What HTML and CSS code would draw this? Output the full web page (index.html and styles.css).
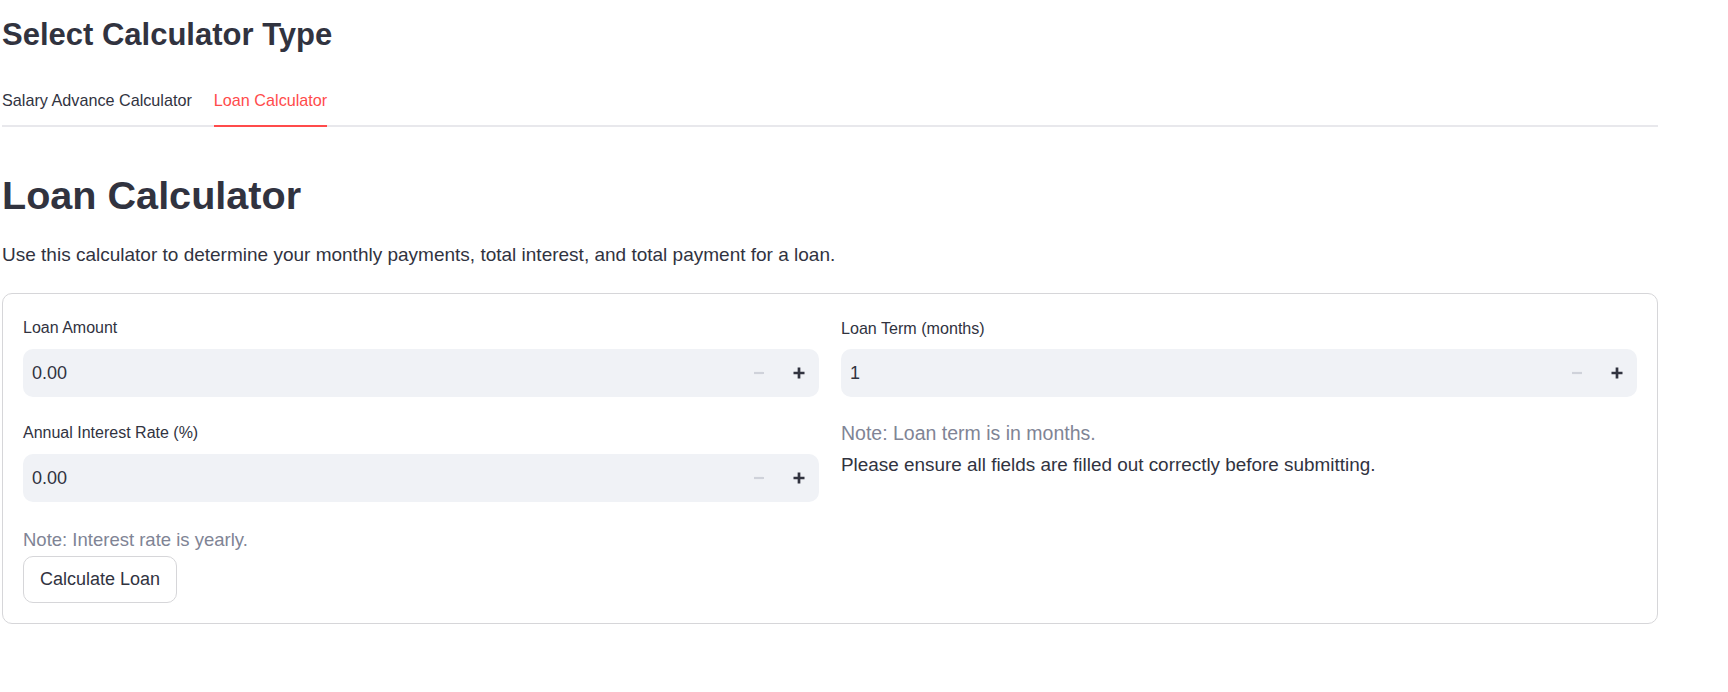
FILE: index.html
```html
<!DOCTYPE html>
<html lang="en">
<head>
<meta charset="utf-8">
<title>Loan Calculator</title>
<link rel="stylesheet" href="styles.css">
</head>
<body>
<div class="app">
  <h3 class="section-title">Select Calculator Type</h3>
  <div class="tabs">
    <div class="tab">Salary Advance Calculator</div>
    <div class="tab active">Loan Calculator</div>
  </div>
  <h1 class="page-title">Loan Calculator</h1>
  <p class="intro">Use this calculator to determine your monthly payments, total interest, and total payment for a loan.</p>
  <div class="card">
    <div class="col">
      <div class="field">
        <label class="field-label">Loan Amount</label>
        <div class="num-input">
          <span class="num-value">0.00</span>
          <button class="step" disabled><svg width="12" height="12" viewBox="0 0 12 12"><path d="M1 6h10" stroke="#cfd2da" stroke-width="2.2"/></svg></button>
          <button class="step"><svg width="12" height="12" viewBox="0 0 12 12"><path d="M6 0.5v11M0.5 6h11" stroke="#31333f" stroke-width="2.7"/></svg></button>
        </div>
      </div>
      <div class="field">
        <label class="field-label">Annual Interest Rate (%)</label>
        <div class="num-input">
          <span class="num-value">0.00</span>
          <button class="step" disabled><svg width="12" height="12" viewBox="0 0 12 12"><path d="M1 6h10" stroke="#cfd2da" stroke-width="2.2"/></svg></button>
          <button class="step"><svg width="12" height="12" viewBox="0 0 12 12"><path d="M6 0.5v11M0.5 6h11" stroke="#31333f" stroke-width="2.7"/></svg></button>
        </div>
      </div>
      <p class="note">Note: Interest rate is yearly.</p>
      <button class="btn">Calculate Loan</button>
    </div>
    <div class="col col-right">
      <div class="field">
        <label class="field-label">Loan Term (months)</label>
        <div class="num-input">
          <span class="num-value">1</span>
          <button class="step" disabled><svg width="12" height="12" viewBox="0 0 12 12"><path d="M1 6h10" stroke="#cfd2da" stroke-width="2.2"/></svg></button>
          <button class="step"><svg width="12" height="12" viewBox="0 0 12 12"><path d="M6 0.5v11M0.5 6h11" stroke="#31333f" stroke-width="2.7"/></svg></button>
        </div>
      </div>
      <p class="note">Note: Loan term is in months.</p>
      <p class="text">Please ensure all fields are filled out correctly before submitting.</p>
    </div>
  </div>
</div>
</body>
</html>
```

FILE: styles.css
```css
* { box-sizing: border-box; }

body {
  margin: 0;
  background: #ffffff;
  font-family: "Liberation Sans", Arial, sans-serif;
  color: #31333f;
}

.app {
  width: 1656px;
  margin-left: 2px;
}

.section-title {
  margin: 15px 0 0;
  font-size: 31px;
  line-height: 40px;
  font-weight: 700;
}

.tabs {
  display: flex;
  gap: 22px;
  margin-top: 33px;
  border-bottom: 2px solid #e8e8ec;
}

.tab {
  font-size: 16.2px;
  line-height: 24px;
  padding-bottom: 13px;
  border-bottom: 2px solid transparent;
  margin-bottom: -2px;
}

.tab.active {
  color: #ff4b4b;
  border-bottom-color: #ff4b4b;
}

.page-title {
  margin: 43px 0 0;
  font-size: 39.6px;
  line-height: 50px;
  font-weight: 700;
}

.intro {
  margin: 21px 0 0;
  font-size: 19px;
  line-height: 28px;
}

.card {
  margin-top: 24px;
  border: 1px solid #d6d6d9;
  border-radius: 10px;
  padding: 20px 20px 20px;
  display: grid;
  grid-template-columns: 1fr 1fr;
  column-gap: 22px;
  align-items: start;
}

.col {
  display: flex;
  flex-direction: column;
  align-items: flex-start;
}

.field {
  width: 100%;
}

.field + .field {
  margin-top: 22px;
}

.field-label {
  display: block;
  font-size: 16px;
  line-height: 22px;
  padding: 3px 0 10px;
}

.col-right .field-label {
  font-size: 16.1px;
}

.num-input {
  display: flex;
  align-items: center;
  height: 48px;
  background: #f0f2f6;
  border-radius: 10px;
  padding-left: 9px;
}

.num-value {
  flex: 1;
  font-size: 18px;
}

.step {
  width: 40px;
  height: 48px;
  border: 0;
  padding: 0;
  background: transparent;
  display: flex;
  align-items: center;
  justify-content: center;
}

.note {
  margin: 24px 0 0;
  font-size: 18.5px;
  line-height: 28px;
  color: #808495;
}

.col-right .note {
  margin-top: 22px;
  font-size: 19.5px;
}

.text {
  margin: 4px 0 0;
  font-size: 18.9px;
  line-height: 28px;
}

.btn {
  margin-top: 2px;
  height: 47px;
  padding: 0 16px;
  border: 1px solid #d6d6d9;
  border-radius: 10px;
  background: #ffffff;
  font-family: inherit;
  font-size: 18px;
  color: #31333f;
}
```
